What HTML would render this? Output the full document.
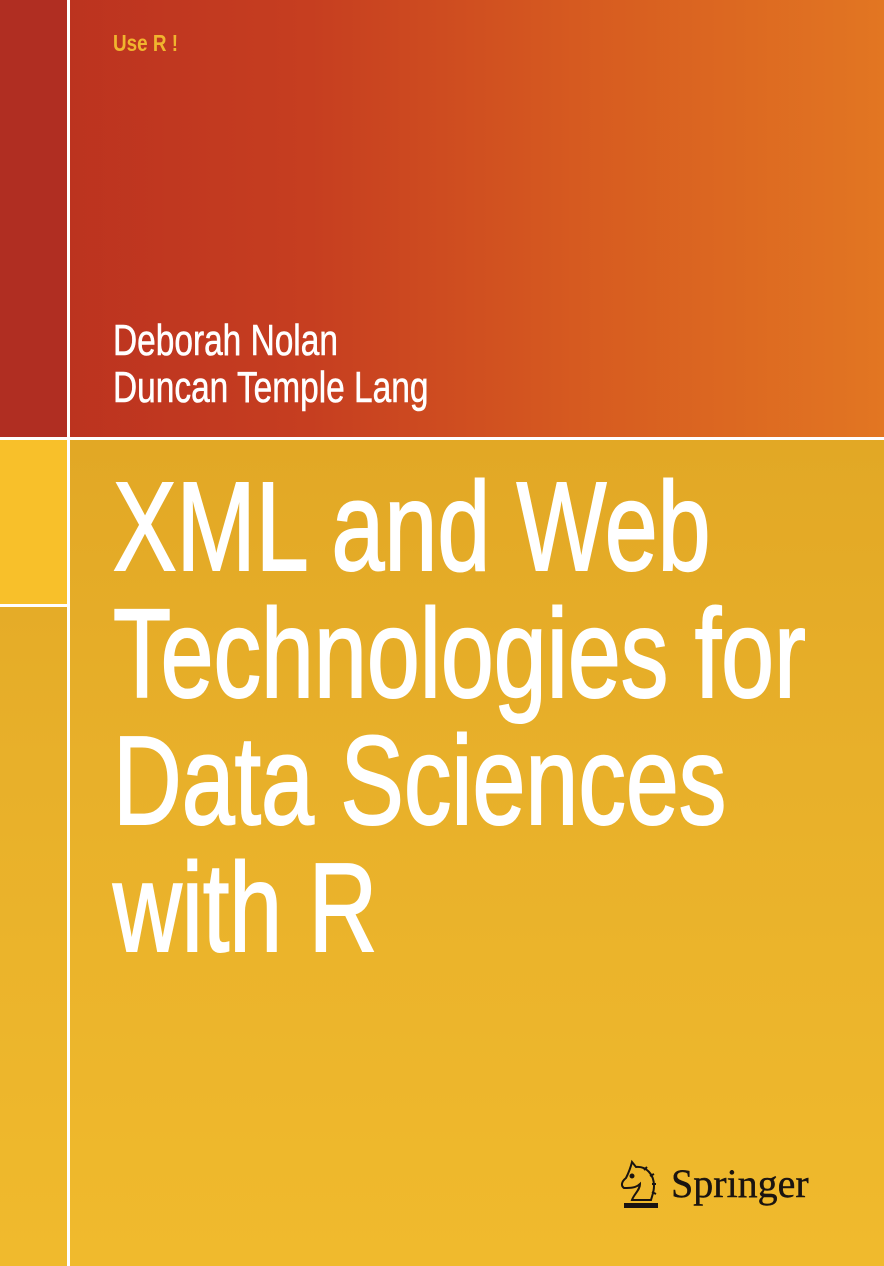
<!DOCTYPE html>
<html><head><meta charset="utf-8"><style>
*{margin:0;padding:0}
body{width:884px;height:1266px;position:relative;overflow:hidden;background:#e9b22a}
.top{position:absolute;left:0;top:0;width:884px;height:438px;background:linear-gradient(90deg,#b9301f 0%,#c63e20 35%,#d65a20 65%,#e27622 100%)}
.topl{position:absolute;left:0;top:0;width:67px;height:438px;background:#b02e22}
.bot{position:absolute;left:0;top:440px;width:884px;height:826px;background:linear-gradient(180deg,#e2a825 0%,#e8b02a 40%,#f0ba2d 100%)}
.botl{position:absolute;left:0;top:440px;width:67px;height:165px;background:#f8c02a}
.vl{position:absolute;left:67px;top:0;width:3px;height:1266px;background:#fff}
.hl{position:absolute;left:0;top:437px;width:884px;height:3px;background:#fff}
.hl2{position:absolute;left:0;top:604px;width:67px;height:3px;background:#fff}
.t{position:absolute;left:113px;color:#fff;font-family:"Liberation Sans",sans-serif;white-space:nowrap;transform-origin:left top}
.use{position:absolute;left:113px;top:30px;color:#f0b52e;font:bold 23px "Liberation Sans",sans-serif;transform:scaleX(.82);transform-origin:left top}
.au{font-size:44px;transform:scaleX(.76);-webkit-text-stroke:.6px #fff}
.ti{font-size:126px;line-height:127px;transform:scaleX(.755);-webkit-text-stroke:2px #fff}
.sp{position:absolute;left:671px;top:1160px;font:40px "Liberation Serif",serif;color:#1a1410;-webkit-text-stroke:.4px #1a1410}
</style></head><body>
<div class="top"></div><div class="topl"></div>
<div class="bot"></div><div class="botl"></div>
<div class="vl"></div><div class="hl"></div><div class="hl2"></div>
<div class="use">Use R !</div>
<div class="t au" style="top:316px">Deborah Nolan</div>
<div class="t au" style="top:363px">Duncan Temple Lang</div>
<div class="t ti" style="top:463px">XML and Web<br>Technologies for<br>Data Sciences<br>with R</div>
<svg style="position:absolute;left:618px;top:1158px" width="46" height="52" viewBox="0 0 46 52" fill="none" stroke="#1a1410" stroke-width="2">
<path d="M14 4 L18 9 C28 8 36 16 36 28 C36 34 34 38 33 42 L14 42 C16 36 22 32 22 26 C18 30 12 30 6 30 C3 28 3 24 8 20 C10 16 12 12 14 4 Z"/>
<path d="M26 12 L29 9 M32 18 L36 16 M34 26 L38 26 M34 34 L38 36"/>
<circle cx="14" cy="18" r="1.5" fill="#1a1410"/>
<rect x="6" y="45" width="34" height="5" fill="#1a1410" stroke="none"/>
</svg>
<div class="sp">Springer</div>
</body></html>
